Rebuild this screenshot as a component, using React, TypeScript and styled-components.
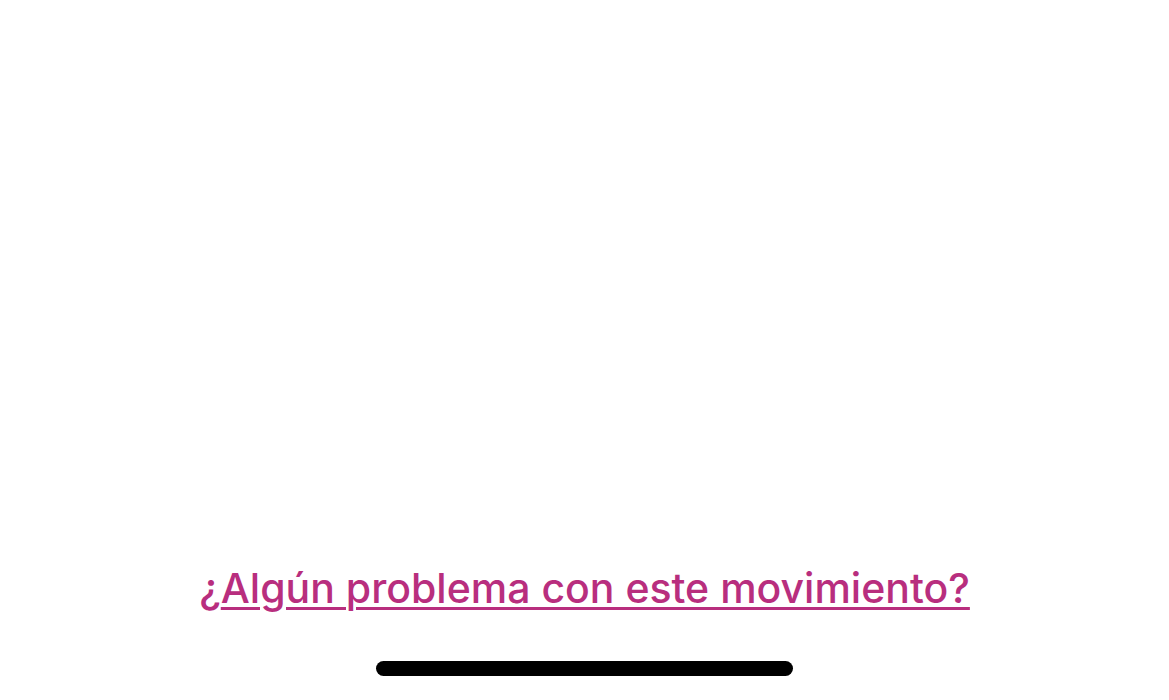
import styled, { createGlobalStyle } from 'styled-components';

const GlobalStyle = createGlobalStyle`
  html, body {
    margin: 0;
    padding: 0;
    background: #ffffff;
  }
`;

const Screen = styled.div`
  height: 700px;
  display: flex;
  flex-direction: column;
  align-items: center;
  justify-content: flex-end;
  background: #ffffff;
`;

const HelpText = styled.p`
  margin: 0 0 48px;
  font-family: Inter, 'Noto Sans', sans-serif;
  font-size: 41px;
  font-weight: 500;
  line-height: 50px;
  color: #b82e7e;
`;

const HelpLink = styled.a`
  color: inherit;
  text-decoration: underline;
  text-decoration-thickness: 3px;
  text-underline-offset: 4px;
  cursor: pointer;
`;

const HomeIndicator = styled.div`
  width: 417px;
  height: 15px;
  border-radius: 8px;
  background: #000000;
  margin-bottom: 24px;
`;

const App = () => {
  return (
    <>
      <GlobalStyle />
      <Screen>
        <HelpText>
          ¿<HelpLink>Algún problema con este movimiento?</HelpLink>
        </HelpText>
        <HomeIndicator />
      </Screen>
    </>
  );
};

export default App;
